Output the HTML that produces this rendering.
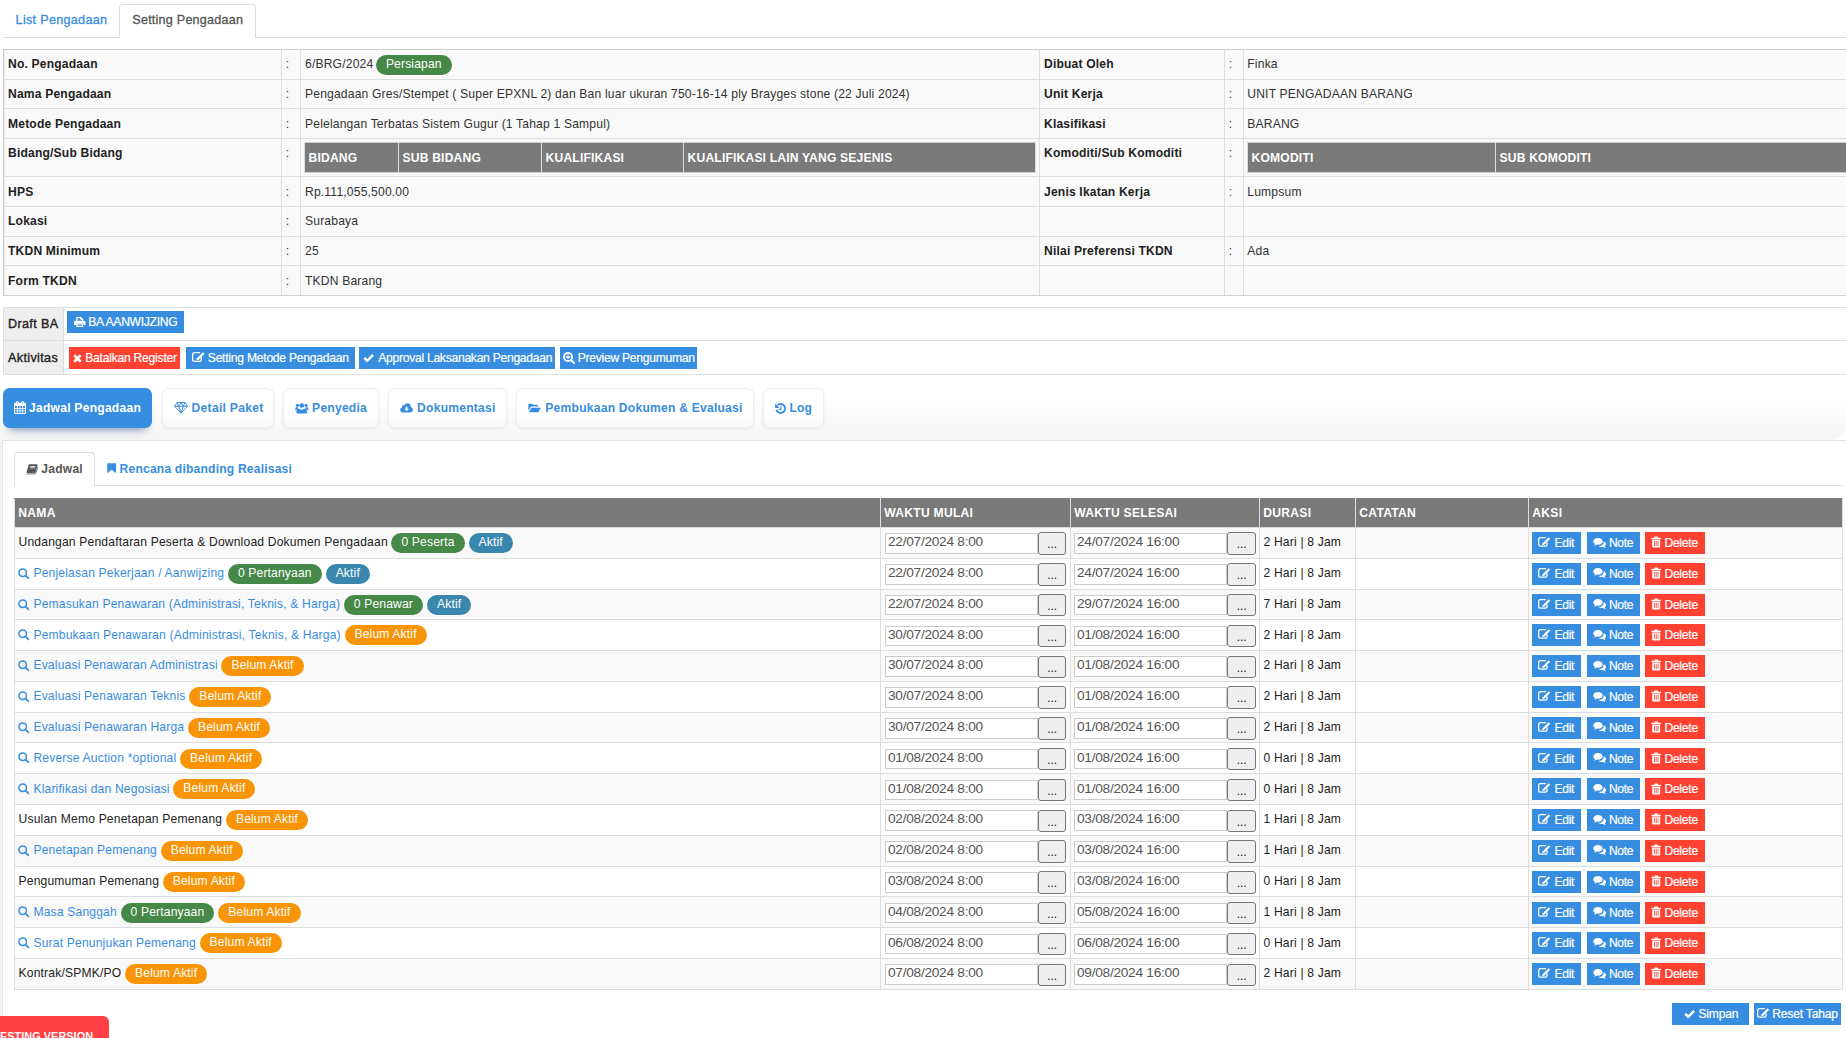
<!DOCTYPE html><html lang="id"><head><meta charset="utf-8"><title>Setting Pengadaan</title><style>
*{box-sizing:border-box}
html,body{margin:0;padding:0}
body{width:1846px;height:1038px;overflow:hidden;position:relative;background:#fff;
 font-family:"Liberation Sans",Arial,sans-serif;font-size:12.1px;letter-spacing:.18px;color:#333;line-height:16.7px}
.ic{display:inline-block;vertical-align:middle;overflow:visible}
a{color:#378de0;text-decoration:none}
.abs{position:absolute}
/* top tabs */
#t1line{left:3px;top:37px;width:1850px;height:1px;background:#ddd}
#t1a{left:15.6px;top:11.5px;font-size:12.6px;letter-spacing:.3px;-webkit-text-stroke:.3px #378de0;color:#378de0;white-space:nowrap;line-height:16px}
#t1b{left:119px;top:4px;width:137px;height:34px;border:1px solid #ddd;border-bottom:0;border-radius:4px 4px 0 0;background:#fff}
#t1bt{left:132.3px;top:11.5px;font-size:12.6px;letter-spacing:.22px;-webkit-text-stroke:.3px #555;color:#555;white-space:nowrap;line-height:16px}
/* info table */
table{border-collapse:collapse;border-spacing:0}
#info{left:3px;top:49px;table-layout:fixed;width:1851px;background:#f9f9f9}
#info td{border:1px solid #ddd;padding:2.4px 4px 0;height:29.7px;vertical-align:top;line-height:25.6px;white-space:nowrap;overflow:hidden}
#info td:first-child{border-left-color:#cecece;box-shadow:inset 1px 0 0 #ebebeb}#info tr:first-child td{border-top-color:#cecece}#info tr:last-child td{border-bottom-color:#cecece}
#info td.l{font-weight:bold;color:#222}
#info td.c{padding:2.4px 3.8px 0}#info td:last-child{padding-left:3.3px}
.badge{display:inline-block;height:20px;line-height:19px;border-radius:10px;padding:0 10px;color:#fff;vertical-align:top;letter-spacing:.15px}
.g{background:#468847}.b{background:#3a87ad}.o{background:#f89406}
.inner{table-layout:fixed;margin-top:-.4px;background:#7a7a7a}
#info .inner td, .inner td{border:1px solid #ddd;height:30px;color:#fff;font-weight:bold;padding:6.3px 3.6px 0;line-height:18px;vertical-align:top;box-shadow:none}
/* act table */
#act{left:3px;top:307px;width:1851px;table-layout:fixed}
#act td{border:1px solid #ddd;padding:0;vertical-align:top;white-space:nowrap}
#act td.l{background:#eee;font-size:12.6px;letter-spacing:.36px;color:#222;-webkit-text-stroke:.35px #222;padding-left:4px}
.btn{position:relative;display:inline-block;height:22px;line-height:23.2px;color:#fff;background:#378de0;letter-spacing:-.25px;white-space:nowrap;vertical-align:top;font-size:12.1px}
.btn.r{background:#ff4131}
.btn.abs{position:absolute}
.btn i,.pill i{position:absolute;top:0;height:100%;display:flex;align-items:center}
.btn b,.pill b{position:absolute;top:0;font-weight:inherit}
.btn b{font-weight:normal;-webkit-text-stroke:.2px #fff}
.pill:not(.on) b{top:-1px}.pill.on i{top:-.6px}
/* pills */
#pillbg{left:0;top:380px;width:1851px;height:61px;border-radius:0 0 26px 0;background:linear-gradient(#fff 0,#fff 30%,#f4f4f4 100%)}
.pill{position:absolute;top:388px;height:40px;border-radius:6.5px;font-weight:bold;line-height:40px;white-space:nowrap;color:#378de0;background:linear-gradient(#fff 65%,#f7f7f7);border:1px solid #eee;box-shadow:0 1px 3px rgba(0,0,0,.07)}
.pill.on{background:#378de0;color:#fff;border:0;box-shadow:0 7px 9px -6px rgba(25,60,110,.62)}
/* panel */
#panel{left:2px;top:440px;width:1856px;height:620px;background:#fff;border:1px solid #e3e3e3}
#leftband{left:0;top:441px;width:2px;height:600px;background:#f4f4f4}
#t2line{left:14px;top:485px;width:1829px;height:1px;background:#ddd}
#t2b{left:14px;top:452px;width:81px;height:34px;border:1px solid #ddd;border-bottom:0;border-radius:4px 4px 0 0;background:#fff}
/* main table */
#jad{left:14px;top:497.5px;table-layout:fixed;width:1829px}
#jad th{background:#7a7a7a;color:#fff;font-weight:bold;text-align:left;border:1px solid #ddd;border-top-color:#7a7a7a;height:28.4px;padding:0 3.3px;line-height:28.4px;white-space:nowrap;letter-spacing:.27px}
#jad td{border:1px solid #ddd;height:30.8px;padding:.3px 3.5px 0;vertical-align:top;line-height:29.4px;white-space:nowrap;color:#222}
#jad tr.odd td{background:#f9f9f9}
#jad .badge{margin-top:4.9px}#info .badge{margin-top:3px;margin-left:-1px}
.inp{display:inline-block;vertical-align:top;margin-top:5px;width:153px;height:20.7px;border:1px solid #ccc;background:#fff;color:#555;font-size:13.7px;letter-spacing:-.27px;line-height:16.4px;padding-left:2px;margin-left:.5px}
.c2 .inp{margin-left:-.5px}.c2 .dots{width:28.5px}
.dots{display:inline-block;vertical-align:top;margin-top:4.2px;width:27.5px;height:22.5px;border:1px solid #767676;border-radius:3px;background:#efefef;color:#111;font-size:12px;letter-spacing:0;text-align:center;line-height:23px;margin-left:.4px}
#jad .btn{margin-top:3.9px}#jad td:last-child{padding-left:2.5px}
#testing{left:0;top:1016px;width:109px;height:30px;background:#ff4146;border-radius:0 6px 0 0;color:#fff;font-weight:bold;white-space:nowrap;font-size:10.8px;letter-spacing:.1px;line-height:16px}
</style></head><body>
<div class="abs" id="t1line"></div>
<a class="abs" id="t1a">List Pengadaan</a>
<div class="abs" id="t1b"></div><div class="abs" id="t1bt">Setting Pengadaan</div>
<table class="abs" id="info"><colgroup><col style="width:278px"><col style="width:19px"><col style="width:739px"><col style="width:185px"><col style="width:19px"><col style="width:611px"></colgroup>
<tr><td class="l">No. Pengadaan</td><td class="c">:</td><td>6/BRG/2024 <span class="badge g">Persiapan</span></td><td class="l">Dibuat Oleh</td><td class="c">:</td><td>Finka</td></tr>
<tr><td class="l">Nama Pengadaan</td><td class="c">:</td><td>Pengadaan Gres/Stempet ( Super EPXNL 2) dan Ban luar ukuran 750-16-14 ply Brayges stone (22 Juli 2024)</td><td class="l">Unit Kerja</td><td class="c">:</td><td>UNIT PENGADAAN BARANG</td></tr>
<tr><td class="l">Metode Pengadaan</td><td class="c">:</td><td>Pelelangan Terbatas Sistem Gugur (1 Tahap 1 Sampul)</td><td class="l">Klasifikasi</td><td class="c">:</td><td>BARANG</td></tr>
<tr><td class="l" style="height:38.1px">Bidang/Sub Bidang</td><td class="c">:</td><td style="padding:3px 3px 0"><table class="inner" style="width:731px"><tr><td style="width:94px">BIDANG</td><td style="width:143px">SUB BIDANG</td><td style="width:142px">KUALIFIKASI</td><td style="width:352px">KUALIFIKASI LAIN YANG SEJENIS</td></tr></table></td><td class="l">Komoditi/Sub Komoditi</td><td class="c">:</td><td style="padding:3px 3px 0"><table class="inner" style="width:608px"><tr><td style="width:248px">KOMODITI</td><td style="width:360px">SUB KOMODITI</td></tr></table></td></tr>
<tr><td class="l">HPS</td><td class="c">:</td><td>Rp.111,055,500.00</td><td class="l">Jenis Ikatan Kerja</td><td class="c">:</td><td>Lumpsum</td></tr>
<tr><td class="l">Lokasi</td><td class="c">:</td><td>Surabaya</td><td class="l"></td><td class="c"></td><td></td></tr>
<tr><td class="l">TKDN Minimum</td><td class="c">:</td><td>25</td><td class="l">Nilai Preferensi TKDN</td><td class="c">:</td><td>Ada</td></tr>
<tr><td class="l">Form TKDN</td><td class="c">:</td><td>TKDN Barang</td><td class="l"></td><td class="c"></td><td></td></tr>
</table>
<table class="abs" id="act"><colgroup><col style="width:60.4px"><col></colgroup>
<tr><td class="l" style="height:33px;line-height:20px;padding-top:6.3px">Draft BA</td><td></td></tr>
<tr><td class="l" style="height:34px;line-height:20px;padding-top:6.5px">Aktivitas</td><td></td></tr></table>
<span class="btn  abs" style="width:117px;left:67px;top:311px"><i style="left:6.65px;top:-0.3px"><svg class="ic" viewBox="0 0 16 14" width="11.5" height="10.06" style=""><path d="M4 5.5V.9h5.6l2.400 2.400v2.200" fill="none" stroke="currentColor" stroke-width="1.700" stroke-linejoin="round"/><path d="M9.400 1v2.600H12" fill="none" stroke="currentColor" stroke-width="1.200"/><path d="M1.800 5.200h12.400A1.800 1.800 0 0 1 16 7v4.300h-2.800V8.600H2.800v2.700H0V7a1.800 1.800 0 0 1 1.800-1.800z" fill="currentColor"/><path d="M4 9.500h8v3.600H4z" fill="none" stroke="currentColor" stroke-width="1.700"/></svg></i><b style="left:21.2px;letter-spacing:-0.27px">BA AANWIJZING</b></span>
<span class="btn r abs" style="width:111px;left:69px;top:347px"><i style="left:3.5px;top:0.4px"><svg class="ic" viewBox="0 0 10 10" width="9" height="9.0" style=""><path d="M2.4 2.4L7.6 7.6M7.6 2.4L2.4 7.6" stroke="currentColor" stroke-width="2.9" stroke-linecap="square"/></svg></i><b style="left:16.2px;letter-spacing:-0.225px">Batalkan Register</b></span>
<span class="btn  abs" style="width:169px;left:186px;top:347px"><i style="left:6px;top:-0.9px"><svg class="ic" viewBox="0 0 18 14" width="12.85" height="9.99" style=""><path d="M10.600 .95H3.200A2.250 2.250 0 0 0 .95 3.200v7.600a2.250 2.250 0 0 0 2.250 2.250h7.600a2.250 2.250 0 0 0 2.250-2.250V8.400" fill="none" stroke="currentColor" stroke-width="1.900" stroke-linecap="round"/><path d="M6.100 11.900L6.870 8.870 15.370 .37 17.630 2.630 9.130 11.130z" fill="currentColor"/></svg></i><b style="left:21.8px;letter-spacing:-0.235px">Setting Metode Pengadaan</b></span>
<span class="btn  abs" style="width:196px;left:359px;top:347px"><i style="left:3.8px;top:0px"><svg class="ic" viewBox="0 0 14 11" width="11.2" height="8.8" style=""><path d="M2.700 5.900L5.300 8.500L11.500 2.300" fill="none" stroke="currentColor" stroke-width="3.100" stroke-linecap="square" stroke-linejoin="miter"/></svg></i><b style="left:19.2px;letter-spacing:-0.26px">Approval Laksanakan Pengadaan</b></span>
<span class="btn  abs" style="width:137px;left:560px;top:347px"><i style="left:2.9px;top:0px"><svg class="ic" viewBox="0 0 16 16" width="12" height="12.0" style=""><circle cx="6.700" cy="6.700" r="5.350" fill="none" stroke="currentColor" stroke-width="2.500"/><path d="M10.900 10.900L14.700 14.700" stroke="currentColor" stroke-width="2.800" stroke-linecap="round"/><path d="M4 6.700h5.400M6.700 4v5.400" stroke="currentColor" stroke-width="1.600"/></svg></i><b style="left:17.7px;letter-spacing:-0.26px">Preview Pengumuman</b></span>
<div class="abs" id="pillbg"></div>
<div class="pill on" style="left:3px;width:149px"><i style="left:10.85px"><svg class="ic" viewBox="0 0 13 14" width="12" height="12.92" style=""><path d="M1 1.800h11a1 1 0 0 1 1 1V13a1 1 0 0 1-1 1H1a1 1 0 0 1-1-1V2.800a1 1 0 0 1 1-1z M1.100 5.500v2h2v-2z M4.100 5.500v2h2v-2z M7 5.500v2h2v-2z M9.900 5.500v2h2v-2z M1.100 8.400v1.900h2V8.400z M4.100 8.400v1.900h2V8.400z M7 8.400v1.900h2V8.400z M9.900 8.400v1.900h2V8.400z M1.100 11.200v1.800h2v-1.800z M4.100 11.200v1.800h2v-1.800z M7 11.200v1.800h2v-1.800z M9.900 11.200v1.800h2v-1.800z" fill="currentColor" fill-rule="evenodd"/><rect x="2.300" y="0" width="2.600" height="3.800" rx="1.300" fill="currentColor"/><rect x="8.100" y="0" width="2.600" height="3.800" rx="1.300" fill="currentColor"/><rect x="3.150" y="1" width=".9" height="2" rx=".45" fill="#6aa9e8"/><rect x="8.950" y="1" width=".9" height="2" rx=".45" fill="#6aa9e8"/></svg></i><b style="left:26px;letter-spacing:0.24px">Jadwal Pengadaan</b></div>
<div class="pill " style="left:162px;width:112px"><i style="left:10.9px"><svg class="ic" viewBox="0 0 18 15.200" width="14" height="11.82" style=""><path d="M3.600 .7h10.800L17.300 5.500 9 14.400 .7 5.500z M.7 5.500h16.600 M3.600 .7L6 5.500 9 14.200 12 5.500l2.400-4.800 M6 5.500L9 .7 12 5.500" fill="none" stroke="currentColor" stroke-width="1.250" stroke-linejoin="round"/></svg></i><b style="left:28.6px;letter-spacing:0.28px">Detail Paket</b></div>
<div class="pill " style="left:283px;width:96px"><i style="left:11.25px"><svg class="ic" viewBox="0 0 18 16" width="13.6" height="12.09" style=""><circle cx="9" cy="4.600" r="3.100" fill="currentColor"/><path d="M3.300 15.200c-.9 0-1.500-.6-1.500-1.500 0-2.800 1.200-5 3.200-5 .9.900 2.400 1.600 4 1.600s3.100-.700 4-1.600c2 0 3.200 2.200 3.200 5 0 .9-.6 1.500-1.500 1.500z" fill="currentColor"/><circle cx="3.300" cy="4.400" r="2.100" fill="currentColor"/><circle cx="14.700" cy="4.400" r="2.100" fill="currentColor"/><path d="M.2 9.800c0-1.700.7-3.100 1.900-3.100.5.400 1.300.800 2.200.700-.2.500-.3 1-.3 1.300-1 .300-1.800 1.200-2.200 2.300C.8 11 .2 10.600.2 9.800z M17.800 9.800c0-1.700-.7-3.100-1.900-3.100-.5.400-1.300.800-2.200.700.2.500.3 1 .3 1.300 1 .300 1.800 1.200 2.200 2.300.9 0 1.600-.4 1.600-1.200z" fill="currentColor"/></svg></i><b style="left:28.1px;letter-spacing:0.22px">Penyedia</b></div>
<div class="pill " style="left:388px;width:119px"><i style="left:10.9px"><svg class="ic" viewBox="0 0 18 16" width="13.3" height="11.82" style=""><path d="M14.600 7.100C14.700 6.800 14.700 6.500 14.700 6.200 14.700 3.700 12.700 1.800 10.300 1.800 8.500 1.800 6.900 2.900 6.200 4.500 5.900 4.300 5.500 4.200 5.100 4.200 3.800 4.200 2.800 5.200 2.800 6.500c0 .2 0 .4.1.6C1.300 7.600.3 9 .3 10.600c0 2 1.600 3.600 3.600 3.600h10c2 0 3.600-1.600 3.600-3.600 0-1.700-1.200-3.100-2.900-3.500z M12 9.300l-3 3.100-3-3.100h1.900V6.300h2.200v3z" fill="currentColor" fill-rule="evenodd"/></svg></i><b style="left:28.1px;letter-spacing:0.23px">Dokumentasi</b></div>
<div class="pill " style="left:516px;width:238px"><i style="left:11.1px"><svg class="ic" viewBox="0 0 18 16" width="13" height="11.56" style=""><path d="M.5 12.500V3.700c0-.8.600-1.400 1.400-1.400h3.400c.8 0 1.400.600 1.400 1.400v.2h5.800c.8 0 1.400.600 1.400 1.400v1H5.600c-.9 0-1.900.5-2.400 1.300z" fill="currentColor"/><path d="M1.300 13.700l3-5c.3-.6 1-.9 1.700-.9h11c.6 0 .9.400.6 1l-2.800 4.600c-.3.600-1 .9-1.700.9H2c-.6 0-1-.1-.7-.6z" fill="currentColor"/></svg></i><b style="left:28.3px;letter-spacing:0.23px">Pembukaan Dokumen &amp; Evaluasi</b></div>
<div class="pill " style="left:763px;width:61px"><i style="left:10.7px"><svg class="ic" viewBox="0 0 16 16" width="11" height="11.0" style=""><path d="M3.700 3.300A6.500 6.500 0 1 1 2 9.700" fill="none" stroke="currentColor" stroke-width="2.700"/><path d="M.2 .8V7.200H6.600z" fill="currentColor"/><path d="M8.600 4.600V9.200H5.400" fill="none" stroke="currentColor" stroke-width="1.600"/></svg></i><b style="left:25.5px;letter-spacing:0.1px">Log</b></div>
<div class="abs" id="panel"></div><div class="abs" id="leftband"></div>
<div class="abs" id="t2line"></div><div class="abs" id="t2b"></div>
<div class="abs" style="left:26px;top:461px;font-weight:bold;color:#555;white-space:nowrap;line-height:16px;letter-spacing:.22px"><svg class="ic" viewBox="0 0 17 15" width="11.9" height="10.5" style="margin:-2px 3.4px 0 0"><path d="M5 .5h10.600c.7 0 1.100.6.900 1.300l-2.900 10c-.2.600-.8 1-1.400 1H1.800c-.8 0-1.200-.6-1-1.300L3.600 1.700C3.800 1 4.400.5 5 .5z M6.300 2.900l-.3 1.100h7.200l.3-1.100z M5.700 5.100l-.3 1.100h7.200l.3-1.100z" fill="currentColor" fill-rule="evenodd"/><path d="M.9 14.200h11.500c.9 0 1.600-.5 1.900-1.400l2.300-8.200" fill="none" stroke="currentColor" stroke-width="1.200"/></svg>Jadwal</div>
<a class="abs" style="left:106.7px;top:461px;font-weight:bold;white-space:nowrap;line-height:16px;letter-spacing:.19px"><svg class="ic" viewBox="0 0 12 14" width="9.2" height="10.73" style="margin:-2px 3.7px 0 0"><path d="M.8 .4h10.400a.5.5 0 0 1 .5.500v12.600L6 8.800.3 13.500V.9a.5.5 0 0 1 .5-.5z" fill="currentColor"/></svg>Rencana dibanding Realisasi</a>
<table class="abs" id="jad"><colgroup><col style="width:866px"><col style="width:190px"><col style="width:189px"><col style="width:96px"><col style="width:173px"><col style="width:314px"></colgroup>
<tr><th>NAMA</th><th>WAKTU MULAI</th><th>WAKTU SELESAI</th><th>DURASI</th><th>CATATAN</th><th>AKSI</th></tr>
<tr class="odd"><td>Undangan Pendaftaran Peserta &amp; Download Dokumen Pengadaan<span class="badge g" style="margin-left:3.7px">0 Peserta</span><span class="badge b" style="margin-left:4px">Aktif</span></td><td><span class="inp">22/07/2024 8:00</span><span class="dots">...</span></td><td class="c2"><span class="inp">24/07/2024 16:00</span><span class="dots">...</span></td><td>2 Hari | 8 Jam</td><td></td><td><span class="btn " style="width:49px;"><i style="left:6.9px;top:-1.2px"><svg class="ic" viewBox="0 0 18 14" width="12.5" height="9.72" style=""><path d="M10.600 .95H3.200A2.250 2.250 0 0 0 .95 3.200v7.600a2.250 2.250 0 0 0 2.250 2.250h7.600a2.250 2.250 0 0 0 2.250-2.250V8.400" fill="none" stroke="currentColor" stroke-width="1.900" stroke-linecap="round"/><path d="M6.100 11.900L6.870 8.870 15.370 .37 17.630 2.630 9.130 11.130z" fill="currentColor"/></svg></i><b style="left:22.9px;letter-spacing:-0.25px">Edit</b></span><span class="btn " style="width:53px;margin-left:6px"><i style="left:6.3px;top:-0.9px"><svg class="ic" viewBox="0 0 18 16" width="12.8" height="11.38" style=""><path d="M7 1.5C3.4 1.5.5 3.6.5 6.2c0 1.5 1 2.8 2.4 3.7-.3.9-.9 1.7-1.7 2.3 1.6-.1 3-.7 4-1.5.6.1 1.200.2 1.8.2 3.6 0 6.500-2.100 6.500-4.700S10.600 1.500 7 1.500z" fill="currentColor"/><path d="M14.9 7.3c0 2.9-3.100 5.200-7 5.400 1.100.9 2.700 1.500 4.500 1.500.600 0 1.200-.100 1.700-.200 1 .800 2.300 1.300 3.800 1.400-.700-.600-1.300-1.300-1.600-2.100 1.300-.800 2.100-2 2.100-3.300 0-1.800-1.400-3.300-3.500-4.100 0 .500 0 .900 0 1.400z" fill="currentColor"/></svg></i><b style="left:22.4px;letter-spacing:-0.3px">Note</b></span><span class="btn r" style="width:60px;margin-left:5px"><i style="left:6.6px;top:-1px"><svg class="ic" viewBox="0 0 14 16" width="10.4" height="11.89" style=""><path d="M5 .8h4l.7 1.400H13a.5.5 0 0 1 .5.500v.800a.5.5 0 0 1-.5.500H1a.5.5 0 0 1-.5-.500v-.800A.5.5 0 0 1 1 2.200h3.300z" fill="currentColor"/><path d="M1.600 4.800h10.800v9.200a1.500 1.500 0 0 1-1.500 1.500H3.100a1.500 1.500 0 0 1-1.500-1.500z M4 6.500v7h1.100v-7z M6.450 6.500v7h1.100v-7z M8.900 6.500v7h1.100v-7z" fill="currentColor" fill-rule="evenodd"/></svg></i><b style="left:19.9px;letter-spacing:-0.24px">Delete</b></span></td></tr>
<tr class="even"><td><a><svg class="ic" viewBox="0 0 16 16" width="11.2" height="11.2" style="margin:-1px 3.9px 0 -.2px"><circle cx="6.7" cy="6.7" r="5.4" fill="none" stroke="currentColor" stroke-width="2.2"/><path d="M10.900 10.900L14.800 14.800" stroke="currentColor" stroke-width="2.500" stroke-linecap="round"/></svg>Penjelasan Pekerjaan / Aanwijzing</a><span class="badge g" style="margin-left:3.7px">0 Pertanyaan</span><span class="badge b" style="margin-left:4px">Aktif</span></td><td><span class="inp">22/07/2024 8:00</span><span class="dots">...</span></td><td class="c2"><span class="inp">24/07/2024 16:00</span><span class="dots">...</span></td><td>2 Hari | 8 Jam</td><td></td><td><span class="btn " style="width:49px;"><i style="left:6.9px;top:-1.2px"><svg class="ic" viewBox="0 0 18 14" width="12.5" height="9.72" style=""><path d="M10.600 .95H3.200A2.250 2.250 0 0 0 .95 3.200v7.600a2.250 2.250 0 0 0 2.250 2.250h7.600a2.250 2.250 0 0 0 2.250-2.250V8.400" fill="none" stroke="currentColor" stroke-width="1.900" stroke-linecap="round"/><path d="M6.100 11.900L6.870 8.870 15.370 .37 17.630 2.630 9.130 11.130z" fill="currentColor"/></svg></i><b style="left:22.9px;letter-spacing:-0.25px">Edit</b></span><span class="btn " style="width:53px;margin-left:6px"><i style="left:6.3px;top:-0.9px"><svg class="ic" viewBox="0 0 18 16" width="12.8" height="11.38" style=""><path d="M7 1.5C3.4 1.5.5 3.6.5 6.2c0 1.5 1 2.8 2.4 3.7-.3.9-.9 1.7-1.7 2.3 1.6-.1 3-.7 4-1.5.6.1 1.200.2 1.8.2 3.6 0 6.500-2.100 6.500-4.700S10.600 1.500 7 1.500z" fill="currentColor"/><path d="M14.9 7.3c0 2.9-3.100 5.200-7 5.400 1.100.9 2.700 1.500 4.500 1.500.600 0 1.200-.100 1.700-.200 1 .800 2.300 1.300 3.800 1.400-.700-.600-1.300-1.300-1.600-2.100 1.300-.800 2.100-2 2.100-3.300 0-1.800-1.400-3.300-3.500-4.100 0 .500 0 .900 0 1.400z" fill="currentColor"/></svg></i><b style="left:22.4px;letter-spacing:-0.3px">Note</b></span><span class="btn r" style="width:60px;margin-left:5px"><i style="left:6.6px;top:-1px"><svg class="ic" viewBox="0 0 14 16" width="10.4" height="11.89" style=""><path d="M5 .8h4l.7 1.400H13a.5.5 0 0 1 .5.500v.800a.5.5 0 0 1-.5.500H1a.5.5 0 0 1-.5-.500v-.800A.5.5 0 0 1 1 2.200h3.300z" fill="currentColor"/><path d="M1.600 4.800h10.800v9.200a1.500 1.500 0 0 1-1.500 1.500H3.100a1.500 1.500 0 0 1-1.500-1.500z M4 6.500v7h1.100v-7z M6.450 6.500v7h1.100v-7z M8.900 6.500v7h1.100v-7z" fill="currentColor" fill-rule="evenodd"/></svg></i><b style="left:19.9px;letter-spacing:-0.24px">Delete</b></span></td></tr>
<tr class="odd"><td><a><svg class="ic" viewBox="0 0 16 16" width="11.2" height="11.2" style="margin:-1px 3.9px 0 -.2px"><circle cx="6.7" cy="6.7" r="5.4" fill="none" stroke="currentColor" stroke-width="2.2"/><path d="M10.900 10.900L14.800 14.800" stroke="currentColor" stroke-width="2.500" stroke-linecap="round"/></svg>Pemasukan Penawaran (Administrasi, Teknis, &amp; Harga)</a><span class="badge g" style="margin-left:3.7px">0 Penawar</span><span class="badge b" style="margin-left:4px">Aktif</span></td><td><span class="inp">22/07/2024 8:00</span><span class="dots">...</span></td><td class="c2"><span class="inp">29/07/2024 16:00</span><span class="dots">...</span></td><td>7 Hari | 8 Jam</td><td></td><td><span class="btn " style="width:49px;"><i style="left:6.9px;top:-1.2px"><svg class="ic" viewBox="0 0 18 14" width="12.5" height="9.72" style=""><path d="M10.600 .95H3.200A2.250 2.250 0 0 0 .95 3.200v7.600a2.250 2.250 0 0 0 2.250 2.250h7.600a2.250 2.250 0 0 0 2.250-2.250V8.400" fill="none" stroke="currentColor" stroke-width="1.900" stroke-linecap="round"/><path d="M6.100 11.900L6.870 8.870 15.370 .37 17.630 2.630 9.130 11.130z" fill="currentColor"/></svg></i><b style="left:22.9px;letter-spacing:-0.25px">Edit</b></span><span class="btn " style="width:53px;margin-left:6px"><i style="left:6.3px;top:-0.9px"><svg class="ic" viewBox="0 0 18 16" width="12.8" height="11.38" style=""><path d="M7 1.5C3.4 1.5.5 3.6.5 6.2c0 1.5 1 2.8 2.4 3.7-.3.9-.9 1.7-1.7 2.3 1.6-.1 3-.7 4-1.5.6.1 1.200.2 1.8.2 3.6 0 6.500-2.100 6.500-4.700S10.600 1.500 7 1.500z" fill="currentColor"/><path d="M14.9 7.3c0 2.9-3.100 5.200-7 5.400 1.100.9 2.700 1.500 4.500 1.500.600 0 1.200-.100 1.700-.200 1 .800 2.300 1.300 3.800 1.400-.700-.600-1.300-1.300-1.600-2.100 1.300-.800 2.100-2 2.100-3.300 0-1.800-1.400-3.300-3.500-4.100 0 .500 0 .900 0 1.400z" fill="currentColor"/></svg></i><b style="left:22.4px;letter-spacing:-0.3px">Note</b></span><span class="btn r" style="width:60px;margin-left:5px"><i style="left:6.6px;top:-1px"><svg class="ic" viewBox="0 0 14 16" width="10.4" height="11.89" style=""><path d="M5 .8h4l.7 1.400H13a.5.5 0 0 1 .5.500v.800a.5.5 0 0 1-.5.500H1a.5.5 0 0 1-.5-.500v-.800A.5.5 0 0 1 1 2.200h3.300z" fill="currentColor"/><path d="M1.600 4.800h10.800v9.200a1.500 1.500 0 0 1-1.500 1.500H3.100a1.500 1.500 0 0 1-1.500-1.500z M4 6.500v7h1.100v-7z M6.450 6.500v7h1.100v-7z M8.900 6.500v7h1.100v-7z" fill="currentColor" fill-rule="evenodd"/></svg></i><b style="left:19.9px;letter-spacing:-0.24px">Delete</b></span></td></tr>
<tr class="even"><td><a><svg class="ic" viewBox="0 0 16 16" width="11.2" height="11.2" style="margin:-1px 3.9px 0 -.2px"><circle cx="6.7" cy="6.7" r="5.4" fill="none" stroke="currentColor" stroke-width="2.2"/><path d="M10.900 10.900L14.800 14.800" stroke="currentColor" stroke-width="2.500" stroke-linecap="round"/></svg>Pembukaan Penawaran (Administrasi, Teknis, &amp; Harga)</a><span class="badge o" style="margin-left:3.7px">Belum Aktif</span></td><td><span class="inp">30/07/2024 8:00</span><span class="dots">...</span></td><td class="c2"><span class="inp">01/08/2024 16:00</span><span class="dots">...</span></td><td>2 Hari | 8 Jam</td><td></td><td><span class="btn " style="width:49px;"><i style="left:6.9px;top:-1.2px"><svg class="ic" viewBox="0 0 18 14" width="12.5" height="9.72" style=""><path d="M10.600 .95H3.200A2.250 2.250 0 0 0 .95 3.200v7.600a2.250 2.250 0 0 0 2.250 2.250h7.600a2.250 2.250 0 0 0 2.250-2.250V8.400" fill="none" stroke="currentColor" stroke-width="1.900" stroke-linecap="round"/><path d="M6.100 11.900L6.870 8.870 15.370 .37 17.630 2.630 9.130 11.130z" fill="currentColor"/></svg></i><b style="left:22.9px;letter-spacing:-0.25px">Edit</b></span><span class="btn " style="width:53px;margin-left:6px"><i style="left:6.3px;top:-0.9px"><svg class="ic" viewBox="0 0 18 16" width="12.8" height="11.38" style=""><path d="M7 1.5C3.4 1.5.5 3.6.5 6.2c0 1.5 1 2.8 2.4 3.7-.3.9-.9 1.7-1.7 2.3 1.6-.1 3-.7 4-1.5.6.1 1.200.2 1.8.2 3.6 0 6.500-2.100 6.500-4.700S10.600 1.500 7 1.500z" fill="currentColor"/><path d="M14.9 7.3c0 2.9-3.100 5.200-7 5.400 1.100.9 2.700 1.500 4.500 1.500.600 0 1.200-.100 1.700-.200 1 .800 2.300 1.300 3.800 1.400-.700-.600-1.300-1.300-1.600-2.100 1.300-.800 2.100-2 2.100-3.300 0-1.800-1.400-3.300-3.500-4.100 0 .500 0 .900 0 1.400z" fill="currentColor"/></svg></i><b style="left:22.4px;letter-spacing:-0.3px">Note</b></span><span class="btn r" style="width:60px;margin-left:5px"><i style="left:6.6px;top:-1px"><svg class="ic" viewBox="0 0 14 16" width="10.4" height="11.89" style=""><path d="M5 .8h4l.7 1.400H13a.5.5 0 0 1 .5.500v.800a.5.5 0 0 1-.5.500H1a.5.5 0 0 1-.5-.500v-.800A.5.5 0 0 1 1 2.200h3.300z" fill="currentColor"/><path d="M1.600 4.800h10.800v9.200a1.500 1.500 0 0 1-1.500 1.500H3.100a1.500 1.500 0 0 1-1.500-1.500z M4 6.500v7h1.100v-7z M6.450 6.500v7h1.100v-7z M8.900 6.500v7h1.100v-7z" fill="currentColor" fill-rule="evenodd"/></svg></i><b style="left:19.9px;letter-spacing:-0.24px">Delete</b></span></td></tr>
<tr class="odd"><td><a><svg class="ic" viewBox="0 0 16 16" width="11.2" height="11.2" style="margin:-1px 3.9px 0 -.2px"><circle cx="6.7" cy="6.7" r="5.4" fill="none" stroke="currentColor" stroke-width="2.2"/><path d="M10.900 10.900L14.800 14.800" stroke="currentColor" stroke-width="2.500" stroke-linecap="round"/></svg>Evaluasi Penawaran Administrasi</a><span class="badge o" style="margin-left:3.7px">Belum Aktif</span></td><td><span class="inp">30/07/2024 8:00</span><span class="dots">...</span></td><td class="c2"><span class="inp">01/08/2024 16:00</span><span class="dots">...</span></td><td>2 Hari | 8 Jam</td><td></td><td><span class="btn " style="width:49px;"><i style="left:6.9px;top:-1.2px"><svg class="ic" viewBox="0 0 18 14" width="12.5" height="9.72" style=""><path d="M10.600 .95H3.200A2.250 2.250 0 0 0 .95 3.200v7.600a2.250 2.250 0 0 0 2.250 2.250h7.600a2.250 2.250 0 0 0 2.250-2.250V8.400" fill="none" stroke="currentColor" stroke-width="1.900" stroke-linecap="round"/><path d="M6.100 11.900L6.870 8.870 15.370 .37 17.630 2.630 9.130 11.130z" fill="currentColor"/></svg></i><b style="left:22.9px;letter-spacing:-0.25px">Edit</b></span><span class="btn " style="width:53px;margin-left:6px"><i style="left:6.3px;top:-0.9px"><svg class="ic" viewBox="0 0 18 16" width="12.8" height="11.38" style=""><path d="M7 1.5C3.4 1.5.5 3.6.5 6.2c0 1.5 1 2.8 2.4 3.7-.3.9-.9 1.7-1.7 2.3 1.6-.1 3-.7 4-1.5.6.1 1.200.2 1.8.2 3.6 0 6.500-2.100 6.500-4.700S10.600 1.500 7 1.500z" fill="currentColor"/><path d="M14.9 7.3c0 2.9-3.100 5.200-7 5.400 1.100.9 2.700 1.500 4.500 1.500.600 0 1.200-.100 1.700-.200 1 .800 2.300 1.300 3.800 1.400-.700-.600-1.300-1.300-1.600-2.100 1.300-.800 2.100-2 2.100-3.300 0-1.800-1.400-3.300-3.500-4.100 0 .500 0 .900 0 1.400z" fill="currentColor"/></svg></i><b style="left:22.4px;letter-spacing:-0.3px">Note</b></span><span class="btn r" style="width:60px;margin-left:5px"><i style="left:6.6px;top:-1px"><svg class="ic" viewBox="0 0 14 16" width="10.4" height="11.89" style=""><path d="M5 .8h4l.7 1.400H13a.5.5 0 0 1 .5.500v.800a.5.5 0 0 1-.5.500H1a.5.5 0 0 1-.5-.500v-.800A.5.5 0 0 1 1 2.200h3.300z" fill="currentColor"/><path d="M1.600 4.800h10.800v9.200a1.500 1.500 0 0 1-1.500 1.500H3.100a1.500 1.500 0 0 1-1.500-1.500z M4 6.500v7h1.100v-7z M6.450 6.500v7h1.100v-7z M8.900 6.500v7h1.100v-7z" fill="currentColor" fill-rule="evenodd"/></svg></i><b style="left:19.9px;letter-spacing:-0.24px">Delete</b></span></td></tr>
<tr class="even"><td><a><svg class="ic" viewBox="0 0 16 16" width="11.2" height="11.2" style="margin:-1px 3.9px 0 -.2px"><circle cx="6.7" cy="6.7" r="5.4" fill="none" stroke="currentColor" stroke-width="2.2"/><path d="M10.900 10.900L14.800 14.800" stroke="currentColor" stroke-width="2.500" stroke-linecap="round"/></svg>Evaluasi Penawaran Teknis</a><span class="badge o" style="margin-left:3.7px">Belum Aktif</span></td><td><span class="inp">30/07/2024 8:00</span><span class="dots">...</span></td><td class="c2"><span class="inp">01/08/2024 16:00</span><span class="dots">...</span></td><td>2 Hari | 8 Jam</td><td></td><td><span class="btn " style="width:49px;"><i style="left:6.9px;top:-1.2px"><svg class="ic" viewBox="0 0 18 14" width="12.5" height="9.72" style=""><path d="M10.600 .95H3.200A2.250 2.250 0 0 0 .95 3.200v7.600a2.250 2.250 0 0 0 2.250 2.250h7.600a2.250 2.250 0 0 0 2.250-2.250V8.400" fill="none" stroke="currentColor" stroke-width="1.900" stroke-linecap="round"/><path d="M6.100 11.900L6.870 8.870 15.370 .37 17.630 2.630 9.130 11.130z" fill="currentColor"/></svg></i><b style="left:22.9px;letter-spacing:-0.25px">Edit</b></span><span class="btn " style="width:53px;margin-left:6px"><i style="left:6.3px;top:-0.9px"><svg class="ic" viewBox="0 0 18 16" width="12.8" height="11.38" style=""><path d="M7 1.5C3.4 1.5.5 3.6.5 6.2c0 1.5 1 2.8 2.4 3.7-.3.9-.9 1.7-1.7 2.3 1.6-.1 3-.7 4-1.5.6.1 1.200.2 1.8.2 3.6 0 6.500-2.100 6.500-4.700S10.600 1.500 7 1.500z" fill="currentColor"/><path d="M14.9 7.3c0 2.9-3.100 5.200-7 5.400 1.100.9 2.700 1.500 4.500 1.500.600 0 1.200-.100 1.700-.200 1 .800 2.300 1.300 3.800 1.400-.700-.600-1.300-1.300-1.600-2.100 1.300-.800 2.100-2 2.100-3.300 0-1.800-1.400-3.300-3.500-4.100 0 .500 0 .900 0 1.400z" fill="currentColor"/></svg></i><b style="left:22.4px;letter-spacing:-0.3px">Note</b></span><span class="btn r" style="width:60px;margin-left:5px"><i style="left:6.6px;top:-1px"><svg class="ic" viewBox="0 0 14 16" width="10.4" height="11.89" style=""><path d="M5 .8h4l.7 1.400H13a.5.5 0 0 1 .5.500v.800a.5.5 0 0 1-.5.500H1a.5.5 0 0 1-.5-.500v-.800A.5.5 0 0 1 1 2.200h3.300z" fill="currentColor"/><path d="M1.600 4.800h10.800v9.200a1.500 1.500 0 0 1-1.500 1.500H3.100a1.500 1.500 0 0 1-1.500-1.500z M4 6.500v7h1.100v-7z M6.450 6.500v7h1.100v-7z M8.900 6.500v7h1.100v-7z" fill="currentColor" fill-rule="evenodd"/></svg></i><b style="left:19.9px;letter-spacing:-0.24px">Delete</b></span></td></tr>
<tr class="odd"><td><a><svg class="ic" viewBox="0 0 16 16" width="11.2" height="11.2" style="margin:-1px 3.9px 0 -.2px"><circle cx="6.7" cy="6.7" r="5.4" fill="none" stroke="currentColor" stroke-width="2.2"/><path d="M10.900 10.900L14.800 14.800" stroke="currentColor" stroke-width="2.500" stroke-linecap="round"/></svg>Evaluasi Penawaran Harga</a><span class="badge o" style="margin-left:3.7px">Belum Aktif</span></td><td><span class="inp">30/07/2024 8:00</span><span class="dots">...</span></td><td class="c2"><span class="inp">01/08/2024 16:00</span><span class="dots">...</span></td><td>2 Hari | 8 Jam</td><td></td><td><span class="btn " style="width:49px;"><i style="left:6.9px;top:-1.2px"><svg class="ic" viewBox="0 0 18 14" width="12.5" height="9.72" style=""><path d="M10.600 .95H3.200A2.250 2.250 0 0 0 .95 3.200v7.600a2.250 2.250 0 0 0 2.250 2.250h7.600a2.250 2.250 0 0 0 2.250-2.250V8.400" fill="none" stroke="currentColor" stroke-width="1.900" stroke-linecap="round"/><path d="M6.100 11.900L6.870 8.870 15.370 .37 17.630 2.630 9.130 11.130z" fill="currentColor"/></svg></i><b style="left:22.9px;letter-spacing:-0.25px">Edit</b></span><span class="btn " style="width:53px;margin-left:6px"><i style="left:6.3px;top:-0.9px"><svg class="ic" viewBox="0 0 18 16" width="12.8" height="11.38" style=""><path d="M7 1.5C3.4 1.5.5 3.6.5 6.2c0 1.5 1 2.8 2.4 3.7-.3.9-.9 1.7-1.7 2.3 1.6-.1 3-.7 4-1.5.6.1 1.200.2 1.8.2 3.6 0 6.500-2.100 6.500-4.700S10.600 1.500 7 1.500z" fill="currentColor"/><path d="M14.9 7.3c0 2.9-3.100 5.200-7 5.400 1.100.9 2.700 1.500 4.500 1.500.600 0 1.200-.100 1.700-.200 1 .800 2.300 1.300 3.800 1.400-.700-.600-1.300-1.300-1.600-2.100 1.300-.800 2.100-2 2.100-3.300 0-1.800-1.400-3.300-3.500-4.100 0 .500 0 .900 0 1.400z" fill="currentColor"/></svg></i><b style="left:22.4px;letter-spacing:-0.3px">Note</b></span><span class="btn r" style="width:60px;margin-left:5px"><i style="left:6.6px;top:-1px"><svg class="ic" viewBox="0 0 14 16" width="10.4" height="11.89" style=""><path d="M5 .8h4l.7 1.400H13a.5.5 0 0 1 .5.500v.800a.5.5 0 0 1-.5.500H1a.5.5 0 0 1-.5-.500v-.800A.5.5 0 0 1 1 2.200h3.300z" fill="currentColor"/><path d="M1.600 4.800h10.800v9.200a1.500 1.500 0 0 1-1.500 1.500H3.100a1.500 1.500 0 0 1-1.500-1.500z M4 6.500v7h1.100v-7z M6.450 6.500v7h1.100v-7z M8.900 6.500v7h1.100v-7z" fill="currentColor" fill-rule="evenodd"/></svg></i><b style="left:19.9px;letter-spacing:-0.24px">Delete</b></span></td></tr>
<tr class="even"><td><a><svg class="ic" viewBox="0 0 16 16" width="11.2" height="11.2" style="margin:-1px 3.9px 0 -.2px"><circle cx="6.7" cy="6.7" r="5.4" fill="none" stroke="currentColor" stroke-width="2.2"/><path d="M10.900 10.900L14.800 14.800" stroke="currentColor" stroke-width="2.500" stroke-linecap="round"/></svg>Reverse Auction *optional</a><span class="badge o" style="margin-left:3.7px">Belum Aktif</span></td><td><span class="inp">01/08/2024 8:00</span><span class="dots">...</span></td><td class="c2"><span class="inp">01/08/2024 16:00</span><span class="dots">...</span></td><td>0 Hari | 8 Jam</td><td></td><td><span class="btn " style="width:49px;"><i style="left:6.9px;top:-1.2px"><svg class="ic" viewBox="0 0 18 14" width="12.5" height="9.72" style=""><path d="M10.600 .95H3.200A2.250 2.250 0 0 0 .95 3.200v7.600a2.250 2.250 0 0 0 2.250 2.250h7.600a2.250 2.250 0 0 0 2.250-2.250V8.400" fill="none" stroke="currentColor" stroke-width="1.900" stroke-linecap="round"/><path d="M6.100 11.900L6.870 8.870 15.370 .37 17.630 2.630 9.130 11.130z" fill="currentColor"/></svg></i><b style="left:22.9px;letter-spacing:-0.25px">Edit</b></span><span class="btn " style="width:53px;margin-left:6px"><i style="left:6.3px;top:-0.9px"><svg class="ic" viewBox="0 0 18 16" width="12.8" height="11.38" style=""><path d="M7 1.5C3.4 1.5.5 3.6.5 6.2c0 1.5 1 2.8 2.4 3.7-.3.9-.9 1.7-1.7 2.3 1.6-.1 3-.7 4-1.5.6.1 1.200.2 1.8.2 3.6 0 6.500-2.100 6.500-4.700S10.600 1.500 7 1.500z" fill="currentColor"/><path d="M14.9 7.3c0 2.9-3.100 5.200-7 5.400 1.100.9 2.700 1.500 4.500 1.500.600 0 1.200-.100 1.700-.200 1 .800 2.300 1.300 3.800 1.400-.700-.600-1.300-1.300-1.600-2.100 1.300-.800 2.100-2 2.100-3.300 0-1.800-1.400-3.300-3.500-4.100 0 .500 0 .900 0 1.400z" fill="currentColor"/></svg></i><b style="left:22.4px;letter-spacing:-0.3px">Note</b></span><span class="btn r" style="width:60px;margin-left:5px"><i style="left:6.6px;top:-1px"><svg class="ic" viewBox="0 0 14 16" width="10.4" height="11.89" style=""><path d="M5 .8h4l.7 1.400H13a.5.5 0 0 1 .5.500v.800a.5.5 0 0 1-.5.500H1a.5.5 0 0 1-.5-.500v-.800A.5.5 0 0 1 1 2.200h3.300z" fill="currentColor"/><path d="M1.600 4.800h10.800v9.200a1.500 1.500 0 0 1-1.500 1.500H3.100a1.500 1.500 0 0 1-1.500-1.500z M4 6.500v7h1.100v-7z M6.450 6.500v7h1.100v-7z M8.900 6.500v7h1.100v-7z" fill="currentColor" fill-rule="evenodd"/></svg></i><b style="left:19.9px;letter-spacing:-0.24px">Delete</b></span></td></tr>
<tr class="odd"><td><a><svg class="ic" viewBox="0 0 16 16" width="11.2" height="11.2" style="margin:-1px 3.9px 0 -.2px"><circle cx="6.7" cy="6.7" r="5.4" fill="none" stroke="currentColor" stroke-width="2.2"/><path d="M10.900 10.900L14.800 14.800" stroke="currentColor" stroke-width="2.500" stroke-linecap="round"/></svg>Klarifikasi dan Negosiasi</a><span class="badge o" style="margin-left:3.7px">Belum Aktif</span></td><td><span class="inp">01/08/2024 8:00</span><span class="dots">...</span></td><td class="c2"><span class="inp">01/08/2024 16:00</span><span class="dots">...</span></td><td>0 Hari | 8 Jam</td><td></td><td><span class="btn " style="width:49px;"><i style="left:6.9px;top:-1.2px"><svg class="ic" viewBox="0 0 18 14" width="12.5" height="9.72" style=""><path d="M10.600 .95H3.200A2.250 2.250 0 0 0 .95 3.200v7.600a2.250 2.250 0 0 0 2.250 2.250h7.600a2.250 2.250 0 0 0 2.250-2.250V8.400" fill="none" stroke="currentColor" stroke-width="1.900" stroke-linecap="round"/><path d="M6.100 11.900L6.870 8.870 15.370 .37 17.630 2.630 9.130 11.130z" fill="currentColor"/></svg></i><b style="left:22.9px;letter-spacing:-0.25px">Edit</b></span><span class="btn " style="width:53px;margin-left:6px"><i style="left:6.3px;top:-0.9px"><svg class="ic" viewBox="0 0 18 16" width="12.8" height="11.38" style=""><path d="M7 1.5C3.4 1.5.5 3.6.5 6.2c0 1.5 1 2.8 2.4 3.7-.3.9-.9 1.7-1.7 2.3 1.6-.1 3-.7 4-1.5.6.1 1.200.2 1.8.2 3.6 0 6.500-2.100 6.500-4.700S10.600 1.500 7 1.500z" fill="currentColor"/><path d="M14.9 7.3c0 2.9-3.100 5.200-7 5.400 1.100.9 2.700 1.500 4.500 1.500.600 0 1.200-.100 1.700-.200 1 .800 2.300 1.300 3.800 1.400-.700-.600-1.300-1.300-1.600-2.100 1.300-.800 2.100-2 2.100-3.300 0-1.800-1.400-3.300-3.500-4.100 0 .500 0 .900 0 1.400z" fill="currentColor"/></svg></i><b style="left:22.4px;letter-spacing:-0.3px">Note</b></span><span class="btn r" style="width:60px;margin-left:5px"><i style="left:6.6px;top:-1px"><svg class="ic" viewBox="0 0 14 16" width="10.4" height="11.89" style=""><path d="M5 .8h4l.7 1.400H13a.5.5 0 0 1 .5.500v.800a.5.5 0 0 1-.5.500H1a.5.5 0 0 1-.5-.500v-.800A.5.5 0 0 1 1 2.200h3.300z" fill="currentColor"/><path d="M1.600 4.800h10.800v9.200a1.500 1.500 0 0 1-1.500 1.500H3.100a1.500 1.500 0 0 1-1.500-1.500z M4 6.500v7h1.100v-7z M6.450 6.500v7h1.100v-7z M8.900 6.500v7h1.100v-7z" fill="currentColor" fill-rule="evenodd"/></svg></i><b style="left:19.9px;letter-spacing:-0.24px">Delete</b></span></td></tr>
<tr class="even"><td>Usulan Memo Penetapan Pemenang<span class="badge o" style="margin-left:3.7px">Belum Aktif</span></td><td><span class="inp">02/08/2024 8:00</span><span class="dots">...</span></td><td class="c2"><span class="inp">03/08/2024 16:00</span><span class="dots">...</span></td><td>1 Hari | 8 Jam</td><td></td><td><span class="btn " style="width:49px;"><i style="left:6.9px;top:-1.2px"><svg class="ic" viewBox="0 0 18 14" width="12.5" height="9.72" style=""><path d="M10.600 .95H3.200A2.250 2.250 0 0 0 .95 3.200v7.600a2.250 2.250 0 0 0 2.250 2.250h7.600a2.250 2.250 0 0 0 2.250-2.250V8.400" fill="none" stroke="currentColor" stroke-width="1.900" stroke-linecap="round"/><path d="M6.100 11.900L6.870 8.870 15.370 .37 17.630 2.630 9.130 11.130z" fill="currentColor"/></svg></i><b style="left:22.9px;letter-spacing:-0.25px">Edit</b></span><span class="btn " style="width:53px;margin-left:6px"><i style="left:6.3px;top:-0.9px"><svg class="ic" viewBox="0 0 18 16" width="12.8" height="11.38" style=""><path d="M7 1.5C3.4 1.5.5 3.6.5 6.2c0 1.5 1 2.8 2.4 3.7-.3.9-.9 1.7-1.7 2.3 1.6-.1 3-.7 4-1.5.6.1 1.200.2 1.8.2 3.6 0 6.500-2.100 6.500-4.700S10.600 1.500 7 1.500z" fill="currentColor"/><path d="M14.9 7.3c0 2.9-3.100 5.200-7 5.400 1.100.9 2.700 1.500 4.500 1.500.600 0 1.200-.100 1.700-.200 1 .800 2.300 1.300 3.800 1.400-.700-.600-1.300-1.300-1.600-2.100 1.300-.800 2.100-2 2.100-3.300 0-1.800-1.400-3.300-3.500-4.100 0 .500 0 .900 0 1.400z" fill="currentColor"/></svg></i><b style="left:22.4px;letter-spacing:-0.3px">Note</b></span><span class="btn r" style="width:60px;margin-left:5px"><i style="left:6.6px;top:-1px"><svg class="ic" viewBox="0 0 14 16" width="10.4" height="11.89" style=""><path d="M5 .8h4l.7 1.400H13a.5.5 0 0 1 .5.500v.800a.5.5 0 0 1-.5.500H1a.5.5 0 0 1-.5-.500v-.800A.5.5 0 0 1 1 2.200h3.300z" fill="currentColor"/><path d="M1.600 4.800h10.800v9.200a1.500 1.500 0 0 1-1.500 1.500H3.100a1.500 1.500 0 0 1-1.500-1.500z M4 6.500v7h1.100v-7z M6.450 6.500v7h1.100v-7z M8.900 6.500v7h1.100v-7z" fill="currentColor" fill-rule="evenodd"/></svg></i><b style="left:19.9px;letter-spacing:-0.24px">Delete</b></span></td></tr>
<tr class="odd"><td><a><svg class="ic" viewBox="0 0 16 16" width="11.2" height="11.2" style="margin:-1px 3.9px 0 -.2px"><circle cx="6.7" cy="6.7" r="5.4" fill="none" stroke="currentColor" stroke-width="2.2"/><path d="M10.900 10.900L14.800 14.800" stroke="currentColor" stroke-width="2.500" stroke-linecap="round"/></svg>Penetapan Pemenang</a><span class="badge o" style="margin-left:3.7px">Belum Aktif</span></td><td><span class="inp">02/08/2024 8:00</span><span class="dots">...</span></td><td class="c2"><span class="inp">03/08/2024 16:00</span><span class="dots">...</span></td><td>1 Hari | 8 Jam</td><td></td><td><span class="btn " style="width:49px;"><i style="left:6.9px;top:-1.2px"><svg class="ic" viewBox="0 0 18 14" width="12.5" height="9.72" style=""><path d="M10.600 .95H3.200A2.250 2.250 0 0 0 .95 3.200v7.600a2.250 2.250 0 0 0 2.250 2.250h7.600a2.250 2.250 0 0 0 2.250-2.250V8.400" fill="none" stroke="currentColor" stroke-width="1.900" stroke-linecap="round"/><path d="M6.100 11.900L6.870 8.870 15.370 .37 17.630 2.630 9.130 11.130z" fill="currentColor"/></svg></i><b style="left:22.9px;letter-spacing:-0.25px">Edit</b></span><span class="btn " style="width:53px;margin-left:6px"><i style="left:6.3px;top:-0.9px"><svg class="ic" viewBox="0 0 18 16" width="12.8" height="11.38" style=""><path d="M7 1.5C3.4 1.5.5 3.6.5 6.2c0 1.5 1 2.8 2.4 3.7-.3.9-.9 1.7-1.7 2.3 1.6-.1 3-.7 4-1.5.6.1 1.200.2 1.8.2 3.6 0 6.500-2.100 6.500-4.700S10.600 1.500 7 1.500z" fill="currentColor"/><path d="M14.9 7.3c0 2.9-3.100 5.200-7 5.400 1.100.9 2.700 1.500 4.500 1.500.600 0 1.200-.100 1.700-.200 1 .800 2.300 1.300 3.800 1.400-.700-.600-1.300-1.300-1.600-2.100 1.300-.800 2.100-2 2.100-3.300 0-1.800-1.400-3.300-3.500-4.100 0 .500 0 .900 0 1.400z" fill="currentColor"/></svg></i><b style="left:22.4px;letter-spacing:-0.3px">Note</b></span><span class="btn r" style="width:60px;margin-left:5px"><i style="left:6.6px;top:-1px"><svg class="ic" viewBox="0 0 14 16" width="10.4" height="11.89" style=""><path d="M5 .8h4l.7 1.400H13a.5.5 0 0 1 .5.500v.800a.5.5 0 0 1-.5.500H1a.5.5 0 0 1-.5-.500v-.800A.5.5 0 0 1 1 2.200h3.300z" fill="currentColor"/><path d="M1.600 4.800h10.800v9.200a1.500 1.500 0 0 1-1.500 1.500H3.100a1.500 1.500 0 0 1-1.500-1.500z M4 6.500v7h1.100v-7z M6.450 6.500v7h1.100v-7z M8.900 6.500v7h1.100v-7z" fill="currentColor" fill-rule="evenodd"/></svg></i><b style="left:19.9px;letter-spacing:-0.24px">Delete</b></span></td></tr>
<tr class="even"><td>Pengumuman Pemenang<span class="badge o" style="margin-left:3.7px">Belum Aktif</span></td><td><span class="inp">03/08/2024 8:00</span><span class="dots">...</span></td><td class="c2"><span class="inp">03/08/2024 16:00</span><span class="dots">...</span></td><td>0 Hari | 8 Jam</td><td></td><td><span class="btn " style="width:49px;"><i style="left:6.9px;top:-1.2px"><svg class="ic" viewBox="0 0 18 14" width="12.5" height="9.72" style=""><path d="M10.600 .95H3.200A2.250 2.250 0 0 0 .95 3.200v7.600a2.250 2.250 0 0 0 2.250 2.250h7.600a2.250 2.250 0 0 0 2.250-2.250V8.400" fill="none" stroke="currentColor" stroke-width="1.900" stroke-linecap="round"/><path d="M6.100 11.900L6.870 8.870 15.370 .37 17.630 2.630 9.130 11.130z" fill="currentColor"/></svg></i><b style="left:22.9px;letter-spacing:-0.25px">Edit</b></span><span class="btn " style="width:53px;margin-left:6px"><i style="left:6.3px;top:-0.9px"><svg class="ic" viewBox="0 0 18 16" width="12.8" height="11.38" style=""><path d="M7 1.5C3.4 1.5.5 3.6.5 6.2c0 1.5 1 2.8 2.4 3.7-.3.9-.9 1.7-1.7 2.3 1.6-.1 3-.7 4-1.5.6.1 1.200.2 1.8.2 3.6 0 6.500-2.100 6.500-4.700S10.600 1.500 7 1.500z" fill="currentColor"/><path d="M14.9 7.3c0 2.9-3.100 5.200-7 5.400 1.100.9 2.700 1.500 4.500 1.500.600 0 1.200-.100 1.700-.200 1 .800 2.300 1.300 3.800 1.400-.700-.600-1.300-1.300-1.600-2.100 1.300-.800 2.100-2 2.100-3.300 0-1.800-1.400-3.300-3.500-4.100 0 .500 0 .900 0 1.400z" fill="currentColor"/></svg></i><b style="left:22.4px;letter-spacing:-0.3px">Note</b></span><span class="btn r" style="width:60px;margin-left:5px"><i style="left:6.6px;top:-1px"><svg class="ic" viewBox="0 0 14 16" width="10.4" height="11.89" style=""><path d="M5 .8h4l.7 1.400H13a.5.5 0 0 1 .5.500v.800a.5.5 0 0 1-.5.500H1a.5.5 0 0 1-.5-.500v-.800A.5.5 0 0 1 1 2.200h3.300z" fill="currentColor"/><path d="M1.600 4.800h10.800v9.200a1.500 1.500 0 0 1-1.500 1.500H3.100a1.500 1.500 0 0 1-1.500-1.500z M4 6.500v7h1.100v-7z M6.450 6.500v7h1.100v-7z M8.900 6.500v7h1.100v-7z" fill="currentColor" fill-rule="evenodd"/></svg></i><b style="left:19.9px;letter-spacing:-0.24px">Delete</b></span></td></tr>
<tr class="odd"><td><a><svg class="ic" viewBox="0 0 16 16" width="11.2" height="11.2" style="margin:-1px 3.9px 0 -.2px"><circle cx="6.7" cy="6.7" r="5.4" fill="none" stroke="currentColor" stroke-width="2.2"/><path d="M10.900 10.900L14.800 14.800" stroke="currentColor" stroke-width="2.500" stroke-linecap="round"/></svg>Masa Sanggah</a><span class="badge g" style="margin-left:3.7px">0 Pertanyaan</span><span class="badge o" style="margin-left:4px">Belum Aktif</span></td><td><span class="inp">04/08/2024 8:00</span><span class="dots">...</span></td><td class="c2"><span class="inp">05/08/2024 16:00</span><span class="dots">...</span></td><td>1 Hari | 8 Jam</td><td></td><td><span class="btn " style="width:49px;"><i style="left:6.9px;top:-1.2px"><svg class="ic" viewBox="0 0 18 14" width="12.5" height="9.72" style=""><path d="M10.600 .95H3.200A2.250 2.250 0 0 0 .95 3.200v7.600a2.250 2.250 0 0 0 2.250 2.250h7.600a2.250 2.250 0 0 0 2.250-2.250V8.400" fill="none" stroke="currentColor" stroke-width="1.900" stroke-linecap="round"/><path d="M6.100 11.900L6.870 8.870 15.370 .37 17.630 2.630 9.130 11.130z" fill="currentColor"/></svg></i><b style="left:22.9px;letter-spacing:-0.25px">Edit</b></span><span class="btn " style="width:53px;margin-left:6px"><i style="left:6.3px;top:-0.9px"><svg class="ic" viewBox="0 0 18 16" width="12.8" height="11.38" style=""><path d="M7 1.5C3.4 1.5.5 3.6.5 6.2c0 1.5 1 2.8 2.4 3.7-.3.9-.9 1.7-1.7 2.3 1.6-.1 3-.7 4-1.5.6.1 1.200.2 1.8.2 3.6 0 6.500-2.100 6.500-4.700S10.600 1.500 7 1.500z" fill="currentColor"/><path d="M14.9 7.3c0 2.9-3.100 5.200-7 5.400 1.100.9 2.700 1.500 4.500 1.500.600 0 1.200-.100 1.700-.200 1 .800 2.300 1.300 3.800 1.400-.700-.600-1.300-1.300-1.600-2.100 1.300-.800 2.100-2 2.100-3.300 0-1.800-1.400-3.300-3.500-4.100 0 .500 0 .900 0 1.400z" fill="currentColor"/></svg></i><b style="left:22.4px;letter-spacing:-0.3px">Note</b></span><span class="btn r" style="width:60px;margin-left:5px"><i style="left:6.6px;top:-1px"><svg class="ic" viewBox="0 0 14 16" width="10.4" height="11.89" style=""><path d="M5 .8h4l.7 1.400H13a.5.5 0 0 1 .5.500v.800a.5.5 0 0 1-.5.500H1a.5.5 0 0 1-.5-.500v-.800A.5.5 0 0 1 1 2.200h3.300z" fill="currentColor"/><path d="M1.600 4.800h10.800v9.200a1.500 1.500 0 0 1-1.500 1.500H3.100a1.500 1.500 0 0 1-1.500-1.500z M4 6.500v7h1.100v-7z M6.450 6.500v7h1.100v-7z M8.900 6.500v7h1.100v-7z" fill="currentColor" fill-rule="evenodd"/></svg></i><b style="left:19.9px;letter-spacing:-0.24px">Delete</b></span></td></tr>
<tr class="even"><td><a><svg class="ic" viewBox="0 0 16 16" width="11.2" height="11.2" style="margin:-1px 3.9px 0 -.2px"><circle cx="6.7" cy="6.7" r="5.4" fill="none" stroke="currentColor" stroke-width="2.2"/><path d="M10.900 10.900L14.800 14.800" stroke="currentColor" stroke-width="2.500" stroke-linecap="round"/></svg>Surat Penunjukan Pemenang</a><span class="badge o" style="margin-left:3.7px">Belum Aktif</span></td><td><span class="inp">06/08/2024 8:00</span><span class="dots">...</span></td><td class="c2"><span class="inp">06/08/2024 16:00</span><span class="dots">...</span></td><td>0 Hari | 8 Jam</td><td></td><td><span class="btn " style="width:49px;"><i style="left:6.9px;top:-1.2px"><svg class="ic" viewBox="0 0 18 14" width="12.5" height="9.72" style=""><path d="M10.600 .95H3.200A2.250 2.250 0 0 0 .95 3.200v7.600a2.250 2.250 0 0 0 2.250 2.250h7.600a2.250 2.250 0 0 0 2.250-2.250V8.400" fill="none" stroke="currentColor" stroke-width="1.900" stroke-linecap="round"/><path d="M6.100 11.900L6.870 8.870 15.370 .37 17.630 2.630 9.130 11.130z" fill="currentColor"/></svg></i><b style="left:22.9px;letter-spacing:-0.25px">Edit</b></span><span class="btn " style="width:53px;margin-left:6px"><i style="left:6.3px;top:-0.9px"><svg class="ic" viewBox="0 0 18 16" width="12.8" height="11.38" style=""><path d="M7 1.5C3.4 1.5.5 3.6.5 6.2c0 1.5 1 2.8 2.4 3.7-.3.9-.9 1.7-1.7 2.3 1.6-.1 3-.7 4-1.5.6.1 1.200.2 1.8.2 3.6 0 6.500-2.100 6.500-4.700S10.600 1.500 7 1.500z" fill="currentColor"/><path d="M14.9 7.3c0 2.9-3.100 5.200-7 5.400 1.100.9 2.700 1.500 4.500 1.500.600 0 1.200-.100 1.700-.200 1 .800 2.300 1.300 3.800 1.400-.700-.600-1.300-1.300-1.600-2.100 1.300-.800 2.100-2 2.100-3.300 0-1.800-1.400-3.300-3.500-4.100 0 .500 0 .900 0 1.400z" fill="currentColor"/></svg></i><b style="left:22.4px;letter-spacing:-0.3px">Note</b></span><span class="btn r" style="width:60px;margin-left:5px"><i style="left:6.6px;top:-1px"><svg class="ic" viewBox="0 0 14 16" width="10.4" height="11.89" style=""><path d="M5 .8h4l.7 1.400H13a.5.5 0 0 1 .5.500v.800a.5.5 0 0 1-.5.500H1a.5.5 0 0 1-.5-.500v-.800A.5.5 0 0 1 1 2.200h3.300z" fill="currentColor"/><path d="M1.600 4.800h10.800v9.200a1.500 1.500 0 0 1-1.500 1.500H3.100a1.500 1.500 0 0 1-1.500-1.500z M4 6.500v7h1.100v-7z M6.450 6.500v7h1.100v-7z M8.900 6.500v7h1.100v-7z" fill="currentColor" fill-rule="evenodd"/></svg></i><b style="left:19.9px;letter-spacing:-0.24px">Delete</b></span></td></tr>
<tr class="odd"><td>Kontrak/SPMK/PO<span class="badge o" style="margin-left:3.7px">Belum Aktif</span></td><td><span class="inp">07/08/2024 8:00</span><span class="dots">...</span></td><td class="c2"><span class="inp">09/08/2024 16:00</span><span class="dots">...</span></td><td>2 Hari | 8 Jam</td><td></td><td><span class="btn " style="width:49px;"><i style="left:6.9px;top:-1.2px"><svg class="ic" viewBox="0 0 18 14" width="12.5" height="9.72" style=""><path d="M10.600 .95H3.200A2.250 2.250 0 0 0 .95 3.200v7.600a2.250 2.250 0 0 0 2.250 2.250h7.600a2.250 2.250 0 0 0 2.250-2.250V8.400" fill="none" stroke="currentColor" stroke-width="1.900" stroke-linecap="round"/><path d="M6.100 11.900L6.870 8.870 15.370 .37 17.630 2.630 9.130 11.130z" fill="currentColor"/></svg></i><b style="left:22.9px;letter-spacing:-0.25px">Edit</b></span><span class="btn " style="width:53px;margin-left:6px"><i style="left:6.3px;top:-0.9px"><svg class="ic" viewBox="0 0 18 16" width="12.8" height="11.38" style=""><path d="M7 1.5C3.4 1.5.5 3.6.5 6.2c0 1.5 1 2.8 2.4 3.7-.3.9-.9 1.7-1.7 2.3 1.6-.1 3-.7 4-1.5.6.1 1.200.2 1.8.2 3.6 0 6.500-2.100 6.500-4.700S10.600 1.500 7 1.500z" fill="currentColor"/><path d="M14.9 7.3c0 2.9-3.100 5.200-7 5.400 1.100.9 2.700 1.500 4.500 1.500.600 0 1.200-.100 1.700-.200 1 .800 2.300 1.300 3.800 1.400-.700-.600-1.300-1.300-1.600-2.100 1.300-.800 2.100-2 2.100-3.300 0-1.800-1.400-3.300-3.500-4.100 0 .500 0 .900 0 1.400z" fill="currentColor"/></svg></i><b style="left:22.4px;letter-spacing:-0.3px">Note</b></span><span class="btn r" style="width:60px;margin-left:5px"><i style="left:6.6px;top:-1px"><svg class="ic" viewBox="0 0 14 16" width="10.4" height="11.89" style=""><path d="M5 .8h4l.7 1.400H13a.5.5 0 0 1 .5.500v.800a.5.5 0 0 1-.5.500H1a.5.5 0 0 1-.5-.500v-.800A.5.5 0 0 1 1 2.200h3.300z" fill="currentColor"/><path d="M1.600 4.800h10.800v9.200a1.500 1.500 0 0 1-1.500 1.500H3.100a1.500 1.500 0 0 1-1.500-1.500z M4 6.500v7h1.100v-7z M6.450 6.500v7h1.100v-7z M8.900 6.500v7h1.100v-7z" fill="currentColor" fill-rule="evenodd"/></svg></i><b style="left:19.9px;letter-spacing:-0.24px">Delete</b></span></td></tr>
</table>
<span class="btn abs" style="width:77px;left:1672px;top:1003px"><i style="left:12px;top:0px"><svg class="ic" viewBox="0 0 14 11" width="11.2" height="8.8" style=""><path d="M2.700 5.900L5.300 8.500L11.500 2.300" fill="none" stroke="currentColor" stroke-width="3.100" stroke-linecap="square" stroke-linejoin="miter"/></svg></i><b style="left:26.5px;letter-spacing:-0.2px">Simpan</b></span>
<span class="btn abs" style="width:87px;left:1754px;top:1003px"><i style="left:3.2px;top:-0.9px"><svg class="ic" viewBox="0 0 18 14" width="12.5" height="9.72" style=""><path d="M10.600 .95H3.200A2.250 2.250 0 0 0 .95 3.200v7.600a2.250 2.250 0 0 0 2.250 2.250h7.600a2.250 2.250 0 0 0 2.250-2.250V8.400" fill="none" stroke="currentColor" stroke-width="1.900" stroke-linecap="round"/><path d="M6.100 11.900L6.870 8.870 15.370 .37 17.630 2.630 9.130 11.130z" fill="currentColor"/></svg></i><b style="left:18.3px;letter-spacing:-0.2px">Reset Tahap</b></span>
<div class="abs" id="testing"><span class="abs" style="left:-6.8px;top:12px">TESTING VERSION</span></div>
</body></html>
